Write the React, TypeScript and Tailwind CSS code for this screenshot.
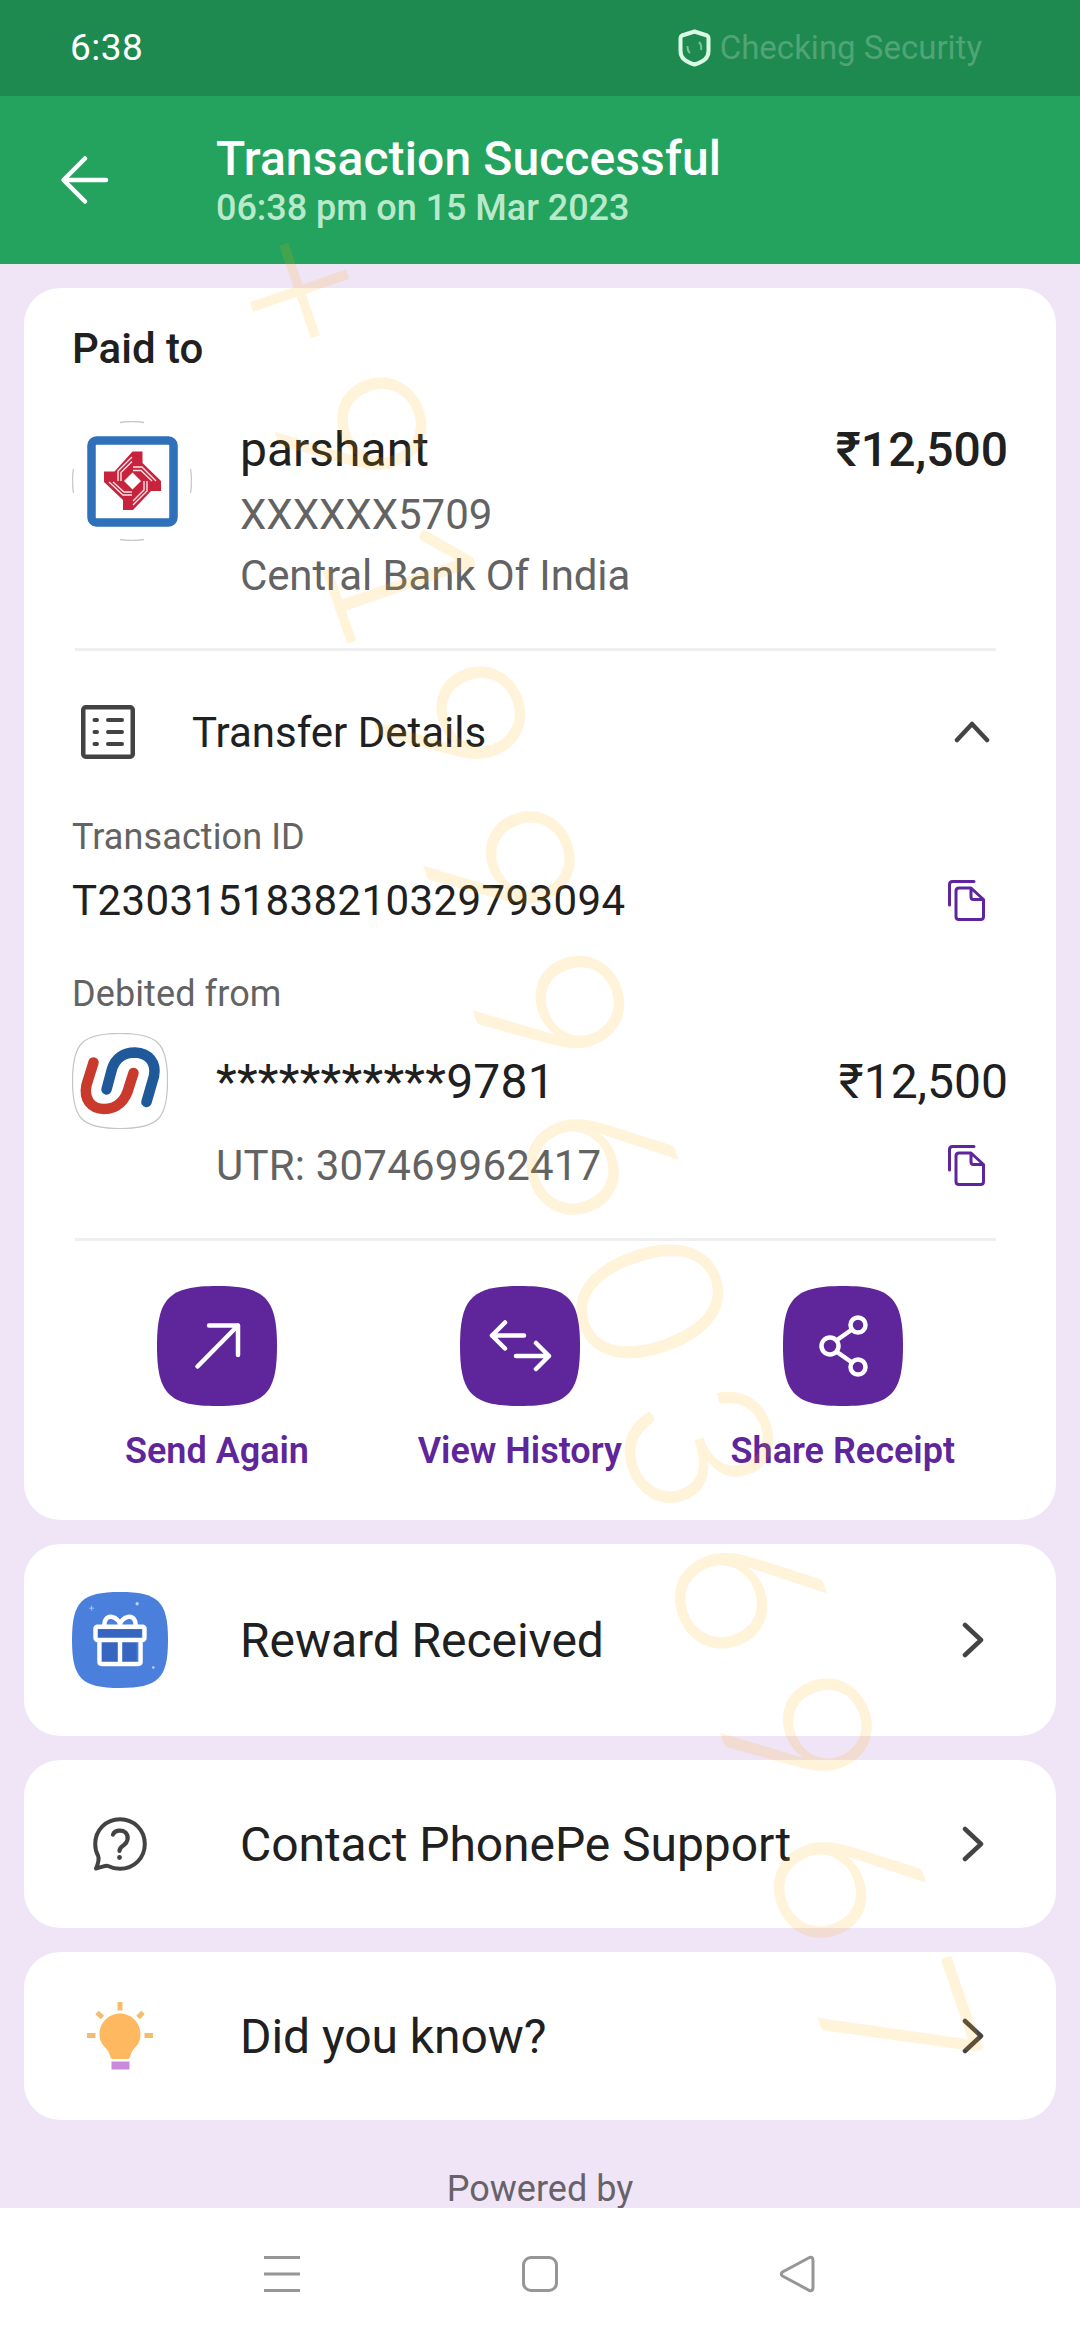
import type { ReactNode } from "react";

const SQUIRCLE =
  "M60 0C108 0 120 12 120 60C120 108 108 120 60 120C12 120 0 108 0 60C0 12 12 0 60 0Z";

const StatusBar = () => (
  <div className="flex h-24 items-center justify-between bg-[#1e8a4f] pl-[70px] pr-[98px]">
    <span className="text-[37px] leading-[48px] tracking-[0.5px] text-white">6:38</span>
    <div className="flex items-center gap-[9px]">
      <svg className="h-[38px] w-[33px]" viewBox="0 0 33 38" fill="none">
        <path
          d="M16.5 2.5L29 6.500C30 7 30.500 7.500 30.500 9V22C30.500 29 26 32.500 16.500 35.500C7 32.500 2.500 29 2.500 22V9C2.500 7.500 3 7 4 6.500Z"
          stroke="#dcfbe6"
          strokeWidth="4"
          strokeLinejoin="round"
        />
        <path d="M9.500 17Q9.500 22 12 24M21 13Q24 16 23 21" stroke="#7cc498" strokeWidth="2" />
      </svg>
      <span className="text-[33px] leading-[48px] text-[#50a476]">Checking Security</span>
    </div>
  </div>
);

const Header = () => (
  <div className="flex h-[168px] bg-[#23a35d] pl-[60px]">
    <svg className="mt-[58px] h-[52px] w-[50px]" viewBox="0 0 50 52" fill="none">
      <path
        d="M46 26H4M25 4.500L3.500 26L25 47.500"
        stroke="#fff"
        strokeWidth="4.500"
        strokeLinecap="round"
        strokeLinejoin="round"
      />
    </svg>
    <div className="ml-[106px] flex flex-col pt-[35px]">
      <h1 className="text-[48px] font-medium leading-[56px] tracking-[0.1px] text-white">
        Transaction Successful
      </h1>
      <p className="text-[36px] font-medium leading-[43px] tracking-[-0.05px] text-[#b9e9cb]">
        06:38 pm on 15 Mar 2023
      </p>
    </div>
  </div>
);

const CentralBankLogo = () => (
  <svg className="h-[120px] w-[120px] shrink-0" viewBox="0 0 120 120" fill="none">
    {/* only the four tips of the ring are visible */}
    <path
      d="M48 1.500Q60 -0.500 72 1.500M48 118.500Q60 120.500 72 118.500M1.500 48Q-0.500 60 1.500 72M118.500 48Q120.500 60 118.500 72"
      stroke="#c8c8c8"
      strokeWidth="1.300"
    />
    <rect x="19.500" y="19.500" width="82" height="82" rx="5" stroke="#2f70bb" strokeWidth="8.500" />
    <path
      d="M60.500 30.500H70.500V42L89 60V70H79L61 89H51V79L32 61V50.500H42.500Z"
      fill="#c7233c"
    />
    <path d="M60.500 51.500L69 60L60.500 68.500L52 60Z" fill="#fff" />
    <path
      d="M60 36L46 50V60M60 40.500L49 51.500V60M84 60L70 46H61M80 60L69 49.500H61M61 84L75 70V60M61 80L72 69V60M37 61L51 74H60M41 61L52 71H60"
      stroke="#fbe3e6"
      strokeWidth="1.400"
    />
  </svg>
);

const UnionBankLogo = () => (
  <svg className="h-24 w-24 shrink-0" viewBox="0 0 96 96" fill="none">
    <path
      d={SQUIRCLE}
      transform="translate(.5 .5) scale(.792)"
      fill="#fff"
      stroke="#c4c4c4"
      strokeWidth="1.500"
    />
    <path
      d="M21.500 29.500L14.500 52C11.500 66 19 76 32 76C46 76 54 66 57 54L61.500 40"
      stroke="#c93a2c"
      strokeWidth="10.500"
      strokeLinecap="round"
    />
    <path
      d="M34.500 56.500L40 36C43.500 25 52 19.500 63 19.500C77 20 84.500 30 82 43L74.500 69"
      stroke="#20599a"
      strokeWidth="10.500"
      strokeLinecap="round"
    />
  </svg>
);

const DetailsIcon = () => (
  <svg className="h-[54px] w-[54px]" viewBox="0 0 54 54" fill="none" stroke="#434343">
    <rect x="2.250" y="2.250" width="49.500" height="49.500" rx="2.500" strokeWidth="4.500" />
    <path
      d="M13.500 15H16M13.500 27H16M13.500 39H16M27 15H41M27 27H41M27 39H41"
      strokeWidth="4"
      strokeLinecap="round"
    />
  </svg>
);

const CopyIcon = () => (
  <svg className="mb-px mr-[23px] h-[41px] w-[37px]" viewBox="0 0 37 41" fill="none">
    <path
      d="M26 1.500H4.500Q1.500 1.500 1.500 4.500V25M23 8H11Q8 8 8 11V36.500Q8 39.500 11 39.500H32.500Q35.500 39.500 35.500 36.500V19.500ZM23 8V17Q23 19.500 25.500 19.500H35.500"
      stroke="#5f259f"
      strokeWidth="3"
      strokeLinecap="round"
      strokeLinejoin="round"
    />
  </svg>
);

const ChevronRight = () => (
  <svg className="mr-6 h-[36px] w-[22px]" viewBox="0 0 22 36" fill="none">
    <path
      d="M3 3L19 18L3 33"
      stroke="#434343"
      strokeWidth="4.500"
      strokeLinecap="round"
      strokeLinejoin="round"
    />
  </svg>
);

const Divider = () => <div className="ml-[3px] mr-3 h-[3px] bg-[#efefef]" />;

const ActionButton = ({ label, children }: { label: string; children: ReactNode }) => (
  <div className="flex flex-col items-center">
    <svg className="h-[120px] w-[120px]" viewBox="0 0 120 120" fill="none">
      <path d={SQUIRCLE} fill="#5f259b" />
      <g stroke="#fff" strokeWidth="4.500" strokeLinecap="round" strokeLinejoin="round">
        {children}
      </g>
    </svg>
    <span className="mt-[21px] whitespace-nowrap text-[36px] font-semibold leading-[48px] text-[#5f259b]">
      {label}
    </span>
  </div>
);

const GiftIcon = () => (
  <svg className="h-[98px] w-[98px]" viewBox="0 0 98 98" fill="none">
    <path d={SQUIRCLE} transform="scale(.8167)" fill="#4a80db" />
    <path d="M26 38H71V48H66V73H30V48H26Z" fill="#3766c0" />
    <g stroke="#fff" strokeWidth="4.500" strokeLinejoin="round">
      <rect x="24" y="35.500" width="50" height="13.500" rx="2" />
      <path d="M28 50V71Q28 73.500 30.500 73.500H67.500Q70 73.500 70 71V50M49 50V73" />
      <path d="M33 34C33 27 37 24.500 41 25.500C45 26.500 49 30 49 34C49 30 53 26.500 57 25.500C61 24.500 65 27 65 34" />
    </g>
    <path d="M20 14V19M17.500 16.500H22.500" stroke="#a9c6f5" strokeWidth="1" />
    <circle cx="66.500" cy="12" r="1.700" fill="#b9d2fa" />
    <circle cx="83" cy="77" r="1.300" fill="#b9d2fa" />
  </svg>
);

const SupportIcon = () => (
  <svg className="h-[54px] w-[54px]" viewBox="0 0 54 54" fill="none">
    <path
      d="M5 38.500C3 35 2.200 31 2.200 27C2.200 13 13 2.200 27 2.200S51.800 13 51.800 27S41 51.800 27 51.800C22 51.800 18 50.500 15 49C13 48 10 50 3 51.500C5 47 6.500 42 5 38.500Z"
      stroke="#434343"
      strokeWidth="4"
      strokeLinejoin="round"
    />
    <path
      d="M20 17.500C22 13 29 12.500 32.500 15.500C36.500 19.500 34.500 25.500 31 28C28 30 26.500 30.500 26.500 34"
      stroke="#434343"
      strokeWidth="4.200"
      strokeLinecap="round"
    />
    <circle cx="26.500" cy="40.500" r="2.400" fill="#434343" />
  </svg>
);

const BulbIcon = () => (
  <svg className="h-[68px] w-[66px]" viewBox="0 0 66 68" fill="none">
    <path
      d="M33 11.500C44.500 11.500 53.500 21 53.500 32C53.500 41 49.500 44 46 48C43 52 44 57 40.500 57H26C22.500 57 23.500 52 20.500 48C17 44 12.500 41 12.500 32C12.500 21 21.500 11.500 33 11.500Z"
      fill="#fdb860"
    />
    <path
      d="M33 0V8.500M10 10.500L15.500 15.500M56 10.500L51 15.500M0 33.500H8.500M57.500 33.500H66"
      stroke="#f3bd6e"
      strokeWidth="5"
    />
    <path d="M24.500 59.500H42.500V67.500H24.500Z" fill="#c98adb" />
  </svg>
);

const LinkCard = ({
  icon,
  label,
  className,
}: {
  icon: ReactNode;
  label: string;
  className: string;
}) => (
  <div className={`flex shrink-0 items-center rounded-[36px] bg-white px-12 ${className}`}>
    <div className="flex w-[96px] items-center justify-center">{icon}</div>
    <span className="ml-[72px] flex-1 pt-px text-[48px] leading-[60px] tracking-[-0.06px]">
      {label}
    </span>
    <ChevronRight />
  </div>
);

const PaymentCard = () => (
  <div className="h-[1232px] shrink-0 rounded-[36px] bg-white px-12 pt-[33px]">
    <h2 className="text-[42px] font-medium leading-[56px]">Paid to</h2>
    <div className="mt-[44px] flex">
      <CentralBankLogo />
      <div className="ml-12 flex-1">
        <p className="mt-px text-[48px] leading-[56px]">parshant</p>
        <p className="mt-[6px] text-[42px] leading-[61px] text-[#636363]">XXXXXX5709</p>
        <p className="text-[42px] leading-[61px] tracking-[-0.12px] text-[#636363]">
          Central Bank Of India
        </p>
      </div>
      <span className="mt-px text-[48px] font-medium leading-[56px]">₹12,500</span>
    </div>
    <div className="mt-[42px]">
      <Divider />
    </div>

    {/* Transfer details */}
    <div className="mt-[51px] flex h-[60px] items-center pl-[9px]">
      <DetailsIcon />
      <span className="ml-[57px] flex-1 pt-px text-[42px] leading-[60px]">Transfer Details</span>
      <svg className="mr-[18px] h-[22px] w-[36px]" viewBox="0 0 36 22" fill="none">
        <path
          d="M3 19L18 3L33 19"
          stroke="#434343"
          strokeWidth="4.500"
          strokeLinecap="round"
          strokeLinejoin="round"
        />
      </svg>
    </div>
    <p className="mt-[51px] text-[36px] leading-[48px] tracking-[0.1px] text-[#636363]">
      Transaction ID
    </p>
    <div className="mt-[10px] flex h-[60px] items-center justify-between">
      <span className="text-[42px] leading-[60px] tracking-[0.4px]">T2303151838210329793094</span>
      <CopyIcon />
    </div>
    <p className="mt-[39px] text-[36px] leading-[48px] tracking-[0.1px] text-[#636363]">
      Debited from
    </p>
    <div className="mt-[15px] flex h-24 items-center">
      <UnionBankLogo />
      <span className="ml-12 flex-1 pt-px text-[48px] leading-[60px] tracking-[0.25px]">
        ***********9781
      </span>
      <span className="pt-px text-[48px] leading-[60px]">₹12,500</span>
    </div>
    <div className="mt-[7px] flex h-[60px] items-center justify-between pl-36">
      <span className="text-[42px] leading-[60px] tracking-[0.2px] text-[#636363]">
        UTR: 307469962417
      </span>
      <CopyIcon />
    </div>
    <div className="mt-[42px]">
      <Divider />
    </div>

    {/* Actions */}
    <div className="mt-[45px] flex justify-between pl-[53px] pr-[53px]">
      <ActionButton label="Send Again">
        <path d="M40.500 80.500L81 39.500M52 39.500H81V69" />
      </ActionButton>
      <ActionButton label="View History">
        <path d="M64 49.500H32M45 36.500L32 49.500L45 62.500M56 70H89M76 57L89 70L76 83" />
      </ActionButton>
      <ActionButton label="Share Receipt">
        <circle cx="47" cy="60" r="8.500" />
        <circle cx="75" cy="39" r="7.500" />
        <circle cx="75" cy="81" r="7.500" />
        <path d="M54 54L69 43.500M54 66L69 76.500" />
      </ActionButton>
    </div>
  </div>
);

const NavBar = () => (
  <div className="flex h-[132px] items-center justify-between bg-white pl-[262px] pr-[262px]">
    <svg className="h-10 w-10" viewBox="0 0 40 40" fill="none" stroke="#969696" strokeWidth="3">
      <path d="M2 3.500H38M2 20H38M2 36.500H38" />
    </svg>
    <svg className="h-10 w-10" viewBox="0 0 40 40" fill="none" stroke="#969696" strokeWidth="3">
      <rect x="3.500" y="3.500" width="33" height="33" rx="7.500" />
    </svg>
    <svg className="h-10 w-10" viewBox="0 0 40 40" fill="none" stroke="#969696" strokeWidth="3">
      <path d="M31.500 3.500L4.500 18Q2 20 4.500 22L31.500 36.500Q35 37.500 35 33.500V6.500Q35 2.500 31.500 3.500Z" />
    </svg>
  </div>
);

const Watermark = () => (
  <div className="pointer-events-none absolute inset-0 flex items-center justify-center overflow-hidden">
    <span className="relative left-[72px] top-px rotate-[71.1deg] whitespace-nowrap font-[Lato,sans-serif] text-[204px] font-light leading-none tracking-[34.500px] text-[#ffac00] opacity-14 [-webkit-text-stroke:2px_#ffac00]">
      +919996036967
    </span>
  </div>
);

export default function App() {
  return (
    <div className="relative flex h-[2340px] w-[1080px] flex-col overflow-hidden bg-[#f0e5f6] font-[Roboto,sans-serif] text-[#202020]">
      <StatusBar />
      <Header />
      <div className="flex h-[1944px] flex-col gap-6 overflow-hidden px-6 pt-6">
        <PaymentCard />
        <LinkCard className="h-48" icon={<GiftIcon />} label="Reward Received" />
        <LinkCard className="h-[168px]" icon={<SupportIcon />} label="Contact PhonePe Support" />
        <LinkCard className="h-[168px]" icon={<BulbIcon />} label="Did you know?" />
        <p className="mt-[21px] shrink-0 text-center text-[36px] leading-[48px] text-[#676269]">
          Powered by
        </p>
      </div>
      <NavBar />
      <Watermark />
    </div>
  );
}
